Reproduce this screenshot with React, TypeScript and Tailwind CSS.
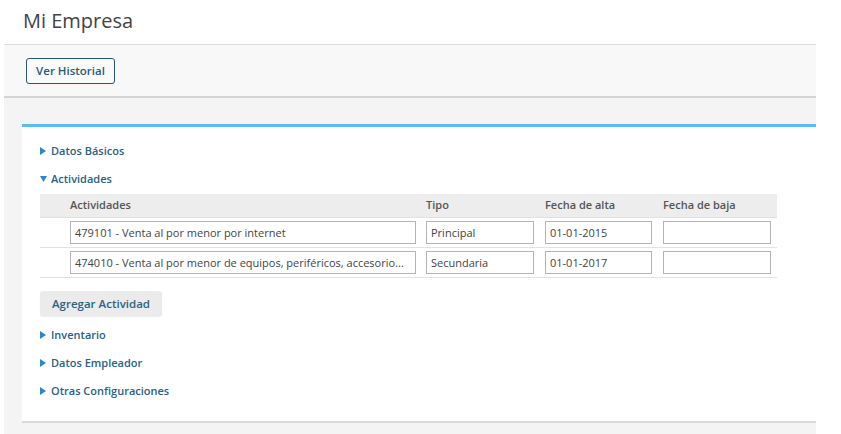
import React from "react";

type Actividad = {
  codigo: string;
  tipo: string;
  alta: string;
  baja: string;
};

const ACTIVIDADES: Actividad[] = [
  { codigo: "479101 - Venta al por menor por internet", tipo: "Principal", alta: "01-01-2015", baja: "" },
  {
    codigo: "474010 - Venta al por menor de equipos, periféricos, accesorio...",
    tipo: "Secundaria",
    alta: "01-01-2017",
    baja: "",
  },
];

function Caret({ open }: { open?: boolean }) {
  if (open) {
    return (
      <svg width="7" height="6" viewBox="0 0 7 6" className="mr-[4px] shrink-0">
        <path d="M0 0h7L3.5 6z" fill="#2f86c4" />
      </svg>
    );
  }
  return (
    <svg width="6" height="8" viewBox="0 0 6 8" className="mr-[5px] shrink-0">
      <path d="M0 0l6 4-6 4z" fill="#2f86c4" />
    </svg>
  );
}

function Section({ label, open }: { label: string; open?: boolean }) {
  return (
    <div className="flex h-[28px] items-center text-[11px] font-semibold text-[#2b5f80]">
      <Caret open={open} />
      <span>{label}</span>
    </div>
  );
}

function Field({ value, width }: { value: string; width: string }) {
  return (
    <div
      className={`${width} h-[23px] overflow-hidden whitespace-nowrap border border-[#b4b4b4] bg-white px-[4px] text-[11px] leading-[21px] text-[#444]`}
    >
      {value}
    </div>
  );
}

export default function App() {
  return (
    <div className="h-[434px] w-[841px] overflow-hidden bg-white font-['Open_Sans',sans-serif]">
      <h1 className="h-[44px] pl-[23px] pt-[6px] text-[20px] font-normal text-[#444]">Mi Empresa</h1>

      <div className="ml-[4px] h-[52px] w-[812px] border-t border-[#dcdcdc] bg-[#f8f8f8] pl-[22px] pt-[12px]">
        <button
          type="button"
          className="h-[26px] w-[89px] rounded-[3px] border border-[#2e5470] bg-[#fafafa] text-[11.5px] font-semibold text-[#2a5977]"
        >
          Ver Historial
        </button>
      </div>

      <div className="ml-[4px] w-[812px] border-t-2 border-[#d4d4d4] bg-[#f4f4f4] pb-[20px] pl-[18px] pt-[26px]">
        <div className="border-t-[3px] border-b-2 border-t-[#5bbcef] border-b-[#d8d8d8] bg-white pb-[16px] pl-[18px] pt-[10px]">
          <Section label="Datos Básicos" />
          <Section label="Actividades" open />

          <div className="mt-[1px] w-[737px]">
            <div className="flex h-[24px] items-center border-b border-[#e2e2e2] bg-[#ededed] pl-[30px] text-[11px] font-semibold text-[#555]">
              <span className="w-[346px]">Actividades</span>
              <span className="ml-[10px] w-[108px]">Tipo</span>
              <span className="ml-[11px] w-[107px]">Fecha de alta</span>
              <span className="ml-[11px] w-[108px]">Fecha de baja</span>
            </div>
            {ACTIVIDADES.map((a) => (
              <div key={a.codigo} className="flex h-[30px] items-center border-b border-[#e2e2e2] pl-[30px]">
                <Field value={a.codigo} width="w-[346px]" />
                <div className="ml-[10px]">
                  <Field value={a.tipo} width="w-[108px]" />
                </div>
                <div className="ml-[11px]">
                  <Field value={a.alta} width="w-[107px]" />
                </div>
                <div className="ml-[11px]">
                  <Field value={a.baja} width="w-[108px]" />
                </div>
              </div>
            ))}
          </div>

          <button
            type="button"
            className="mb-[5px] mt-[13px] h-[25px] w-[122px] rounded-[3px] bg-[#ebebeb] text-[11.5px] font-semibold text-[#2d6283] shadow-[0_1px_1px_rgba(0,0,0,0.08)]"
          >
            Agregar Actividad
          </button>

          <Section label="Inventario" />
          <Section label="Datos Empleador" />
          <Section label="Otras Configuraciones" />
        </div>
      </div>
    </div>
  );
}
